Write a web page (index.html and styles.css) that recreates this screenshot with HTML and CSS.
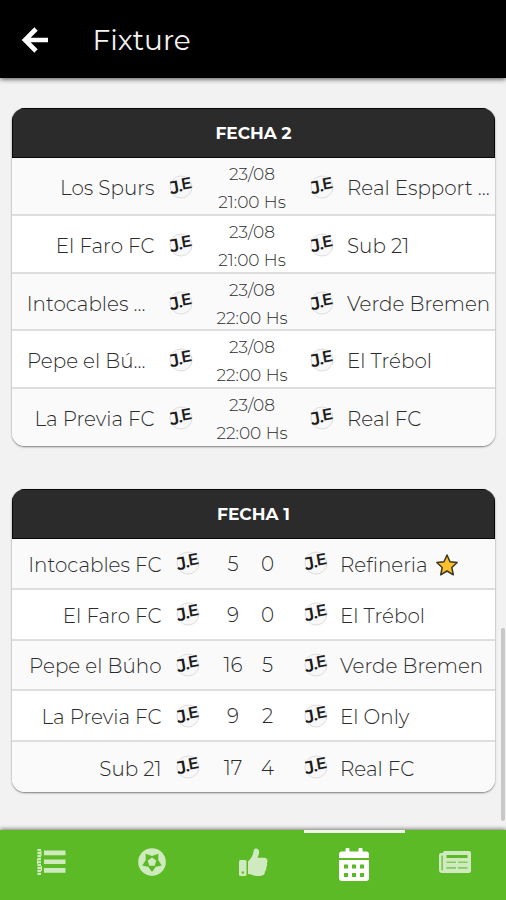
FILE: index.html
```html
<!DOCTYPE html>
<html lang="es">
<head>
<meta charset="utf-8">
<title>Fixture</title>
<link rel="stylesheet" href="styles.css">
</head>
<body>
<svg class="defs" aria-hidden="true">
  <symbol id="crest" viewBox="0 0 26 26">
    <circle cx="13" cy="13" r="11" fill="#f8f8f8" stroke="#dedede" stroke-width="1"/>
    <g transform="rotate(-10 13 13)" fill="#1c1c1c" font-family="Montserrat, sans-serif" font-weight="600">
      <text x="2" y="18.500" font-size="18">J</text>
      <text x="10.500" y="17.500" font-size="16">.</text>
      <text x="13.500" y="16" font-size="16">E</text>
    </g>
  </symbol>
</svg>
<div class="app">
  <header class="topbar">
    <svg class="back" viewBox="0 0 28 26"><path d="M15 2 4 13l11 11M4 13h23" fill="none" stroke="#fff" stroke-width="4.6"/></svg>
    <h1>Fixture</h1>
  </header>
  <main>
    <section class="card upcoming">
      <h2>FECHA 2</h2>
      <div class="row"><span class="home">Los Spurs</span><svg class="crest"><use href="#crest"/></svg><span class="when">23/08<br>21:00 Hs</span><svg class="crest"><use href="#crest"/></svg><span class="away">Real Espport ...</span></div>
      <div class="row"><span class="home">El Faro FC</span><svg class="crest"><use href="#crest"/></svg><span class="when">23/08<br>21:00 Hs</span><svg class="crest"><use href="#crest"/></svg><span class="away">Sub 21</span></div>
      <div class="row"><span class="home cut">Intocables ...</span><svg class="crest"><use href="#crest"/></svg><span class="when">23/08<br>22:00 Hs</span><svg class="crest"><use href="#crest"/></svg><span class="away">Verde Bremen</span></div>
      <div class="row"><span class="home cut">Pepe el Bú...</span><svg class="crest"><use href="#crest"/></svg><span class="when">23/08<br>22:00 Hs</span><svg class="crest"><use href="#crest"/></svg><span class="away">El Trébol</span></div>
      <div class="row"><span class="home">La Previa FC</span><svg class="crest"><use href="#crest"/></svg><span class="when">23/08<br>22:00 Hs</span><svg class="crest"><use href="#crest"/></svg><span class="away">Real FC</span></div>
    </section>
    <section class="card played">
      <h2>FECHA 1</h2>
      <div class="row"><span class="home">Intocables FC</span><svg class="crest"><use href="#crest"/></svg><span class="goals">5</span><span class="goals">0</span><svg class="crest"><use href="#crest"/></svg><span class="away">Refineria<svg class="star" viewBox="0 0 24 24"><path d="m12 2 3 6.800 7.200.7-5.400 5 1.500 7.300L12 18l-6.300 3.800 1.500-7.300-5.400-5L9 8.800z" fill="#fbc02d" stroke="#3c3424" stroke-width="1.500" stroke-linejoin="round"/></svg></span></div>
      <div class="row"><span class="home">El Faro FC</span><svg class="crest"><use href="#crest"/></svg><span class="goals">9</span><span class="goals">0</span><svg class="crest"><use href="#crest"/></svg><span class="away">El Trébol</span></div>
      <div class="row"><span class="home">Pepe el Búho</span><svg class="crest"><use href="#crest"/></svg><span class="goals">16</span><span class="goals">5</span><svg class="crest"><use href="#crest"/></svg><span class="away">Verde Bremen</span></div>
      <div class="row"><span class="home">La Previa FC</span><svg class="crest"><use href="#crest"/></svg><span class="goals">9</span><span class="goals">2</span><svg class="crest"><use href="#crest"/></svg><span class="away">El Only</span></div>
      <div class="row"><span class="home">Sub 21</span><svg class="crest"><use href="#crest"/></svg><span class="goals">17</span><span class="goals">4</span><svg class="crest"><use href="#crest"/></svg><span class="away">Real FC</span></div>
    </section>
    <div class="scrollbar"></div>
  </main>
  <nav>
    <a><svg width="30" height="28" viewBox="0 0 30 28"><path d="M8 2.500h21.500v4.800H8zM8 11.500h21.500v4.600H8zM8 20h21.500v4.800H8z"/><path d="M3.200 1v26" fill="none" stroke="currentColor" stroke-width="3.600" stroke-dasharray="2.200 .8"/><path d="M5 3v5M1.500 11v5M5.500 18v5" fill="none" stroke="currentColor" stroke-width="1"/></svg></a>
    <a><svg width="28" height="28" viewBox="0 0 28 28"><circle cx="14" cy="14" r="13.800"/><path class="hole" d="M14 24l-3.800-5.200-6-1.300 3.600-5.500-.2-6.200L14 8l6.400-2.200-.2 6.200 3.600 5.500-6 1.300z"/><path d="m14 9.500 4.300 3.100-1.600 5.100h-5.400l-1.600-5.100z"/></svg></a>
    <a><svg width="30" height="30" viewBox="0 0 30 30"><rect x="1" y="13" width="7.500" height="16" rx="1.500"/><circle class="hole" cx="4.800" cy="25.500" r="1.200"/><path d="M10 14.500c2.800-2.500 4.700-5.500 5.300-9.200.3-2.300 1-3.800 2.500-3.800 2.600 0 3.500 2 3.300 4.300-.2 2-1.100 3.500-1.600 5h6.700c2.500 0 3.800 2 3.200 4.100l-.5 1.500c.6 1.400.3 2.900-.7 4 .4 1.700-.1 3-1.300 4 .2 3-1.500 4.600-4.700 4.600h-2.500c-3.700 0-6.700-2-9.700-2.100z"/></svg></a>
    <a class="active"><svg width="30" height="34" viewBox="0 0 30 34"><path d="M0 11V7.500a3 3 0 0 1 3-3h3.500V2q0-1 1-1h2q1 0 1 1v2.500h9V2q0-1 1-1h2q1 0 1 1v2.500H27a3 3 0 0 1 3 3V11zM0 13h30v18a3 3 0 0 1-3 3H3a3 3 0 0 1-3-3z"/><path class="hole" d="M5 17.500h4v4H5zM13 17.500h4v4h-4zM21 17.500h4v4h-4zM5 26h4v4H5zM13 26h4v4h-4zM21 26h4v4h-4z"/></svg></a>
    <a><svg width="32" height="22" viewBox="0 0 32 22"><path d="M6 0h24a2 2 0 0 1 2 2v18a2 2 0 0 1-2 2H3a3 3 0 0 1-3-3V4q0-2 2-2h2q0-2 2-2z"/><path class="hole" d="M2.500 4.500h1.200V19q-.6 1-1.200 0zM7.500 4h21v3h-21z"/><path class="hole" opacity=".65" d="M7.500 10.500h9.500v1.500H7.500zM19 10.500h9.500v1.500H19zM7.500 16h9.500v1.700H7.500zM19 16h9.500v1.700H19z"/></svg></a>
  </nav>
</div>
</body>
</html>
```

FILE: styles.css
```css
* { box-sizing: border-box; }
body { margin: 0; background: #f2f2f2; font-family: Montserrat, Inter, sans-serif; color: #2b2b2b; }
.defs { display: none; }
.app { display: flex; flex-direction: column; height: 900px; overflow: hidden; }
.topbar { height: 78px; flex: none; background: #000; display: flex; align-items: center; padding: 2px 22px 0 21px; box-shadow: 0 1px 5px rgba(0,0,0,.7); }
.back { width: 28px; height: 26px; }
h1 { margin: 0 0 0 43.5px; color: #f4f4f4; font-size: 28px; font-weight: 400; }
main { position: relative; flex: 1; padding: 30px 11px 0 12px; }
.card { display: flex; flex-direction: column; border-radius: 13px; overflow: hidden; background: #fff; box-shadow: 0 1px 2px rgba(0,0,0,.5); margin-bottom: 43px; }
.upcoming { height: 338px; }
.played { height: 303px; margin: 0; }
h2 { margin: 0; height: 50px; flex: none; text-align: center; color: #fff; background: #2b2b2b; border: 1px solid #080808; font-size: 17px; font-weight: 700; line-height: 48px; }
.row { flex: 1; display: grid; align-items: center; min-height: 0; border-bottom: 2px solid #dedede; font-size: 19.9px; font-weight: 300; white-space: nowrap; }
.row:nth-child(even) { background: #fafafa; }
.row:last-child { flex: none; border-bottom: 0; }
.upcoming .row:last-child { height: 57px; }
.played .row:last-child { height: 50px; }
.upcoming .row { grid-template-columns: 142.5px 52.5px 90px 50px 1fr; }
.played .row { grid-template-columns: 149.5px 53.5px 36px 33px 56px 1fr; }
.home { text-align: right; padding-top: 3px; }
.cut { padding-right: 9px; }
.away { padding-top: 3px; display: flex; align-items: center; }
.upcoming .home, .upcoming .away { padding-top: 2px; }
.crest { width: 26px; height: 26px; justify-self: center; }
.played .crest:nth-child(5) { margin-left: 8px; }
.when { text-align: center; font-size: 17px; line-height: 28px; padding-top: 2px; }
.goals { text-align: center; padding-top: 1px; }
.star { width: 24px; height: 24px; margin-left: 7px; }
.scrollbar { position: absolute; right: 1px; top: 550px; width: 4px; height: 193px; background: #c8c8c8; border-radius: 2px; }
nav { height: 70px; flex: none; background: #5dba27; color: #ceeabe; display: grid; grid-template-columns: repeat(5, 1fr); box-shadow: 0 -1px 4px rgba(0,0,0,.5); z-index: 1; }
nav a { display: flex; align-items: center; justify-content: center; padding-bottom: 7px; fill: currentColor; }
nav .active { color: #fff; border-top: 3px solid #edf8e6; padding-bottom: 5px; }
nav svg { display: block; }
nav .hole { fill: #5dba27; }
```
